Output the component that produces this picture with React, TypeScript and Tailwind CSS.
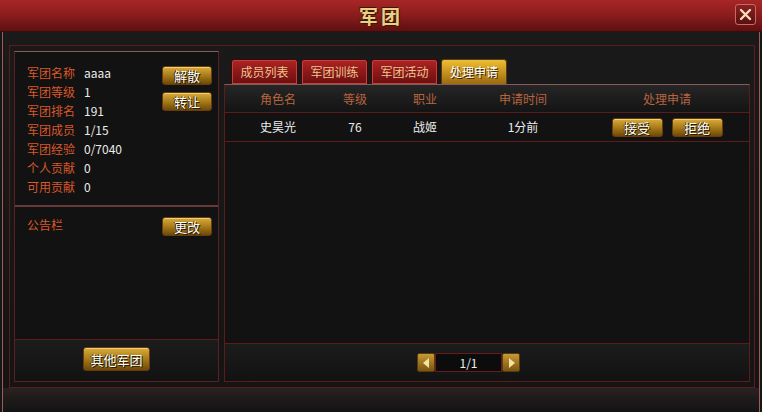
const cn = "font-['Noto_Sans_CJK_SC','Noto_Sans',sans-serif]"

const info = [
  ['军团名称', 'aaaa'],
  ['军团等级', '1'],
  ['军团排名', '191'],
  ['军团成员', '1/15'],
  ['军团经验', '0/7040'],
  ['个人贡献', '0'],
  ['可用贡献', '0'],
]

const tabs = ['成员列表', '军团训练', '军团活动', '处理申请']

function GoldButton({ label, className }: { label: string; className: string }) {
  return (
    <button
      className={`flex items-center justify-center rounded-[3px] border border-[#6a3a10] bg-gradient-to-b from-[#d8ac3c] via-[#a87c18] to-[#6e4a08] text-[13px] leading-none text-white shadow-[inset_0_1px_0_#f0d070] [text-shadow:1px_1px_0_#2a1800,-1px_0_0_#2a1800] ${className}`}
    >
      {label}
    </button>
  )
}

function Arrow({ dir }: { dir: 'left' | 'right' }) {
  return (
    <div className="flex h-[19px] w-[18px] items-center justify-center rounded-[2px] border border-[#5a3a10] bg-gradient-to-b from-[#c89a34] to-[#7a5410]">
      <svg width="7" height="10" viewBox="0 0 7 10">
        {dir === 'left' ? (
          <path d="M6 0 L0 5 L6 10 Z" fill="#f4e2a0" />
        ) : (
          <path d="M1 0 L7 5 L1 10 Z" fill="#f4e2a0" />
        )}
      </svg>
    </div>
  )
}

export default function App() {
  return (
    <div className={`flex h-[412px] w-[762px] flex-col overflow-hidden bg-[#161616] ${cn}`}>
      {/* title bar */}
      <div className="relative flex h-[32px] shrink-0 items-center justify-center border-b border-[#3a0c0c] bg-gradient-to-b from-[#a82626] via-[#8a1c1c] to-[#5c1010]">
        <span className="pt-[2px] text-[19px] font-bold tracking-[3px] text-[#ecce88] [text-shadow:1px_1px_0_#3a1a00,-1px_-1px_0_#3a1a00]">
          军团
        </span>
        <button className="absolute right-[6px] top-[4px] flex h-[21px] w-[21px] items-center justify-center rounded-[3px] border border-[#c86868] bg-gradient-to-b from-[#8a2020] to-[#5a1010]">
          <svg width="13" height="13" viewBox="0 0 13 13">
            <path d="M2 2 L11 11 M11 2 L2 11" stroke="#f6dcb8" strokeWidth="2.4" strokeLinecap="round" />
          </svg>
        </button>
      </div>

      {/* body */}
      <div className="mx-[2px] flex flex-1 flex-col border-x border-[#a05a5a] bg-gradient-to-b from-[#1a1a1a] to-[#141414]">
        <div className="ml-[6px] mr-[4px] mt-[13px] flex border border-[#5c1c1c] px-[4px] pb-[5px] pt-[5px]">
          {/* left panel */}
          <div className="flex h-[331px] w-[206px] flex-col border border-[#5c2020] border-t-[#8a5a5a] bg-[#121212]">
            <div className="flex h-[155px] border-b-2 border-[#6a3a3a] pl-[12px] pr-[6px] pt-[13px]">
              <div className="flex flex-1 flex-col gap-[3px]">
                {info.map(([k, v]) => (
                  <div key={k} className="flex h-[16px] items-center text-[12px] leading-none">
                    <span className="w-[57px] text-[#d9582a]">{k}</span>
                    <span className="text-[#ececec]">{v}</span>
                  </div>
                ))}
              </div>
              <div className="flex flex-col gap-[7px] pt-[1px]">
                <GoldButton label="解散" className="h-[19px] w-[50px]" />
                <GoldButton label="转让" className="h-[19px] w-[50px]" />
              </div>
            </div>
            <div className="flex flex-1 items-start justify-between border-b border-[#5c1c1c] pl-[12px] pr-[6px] pt-[10px]">
              <span className="pt-[2px] text-[12px] leading-none text-[#d9582a]">公告栏</span>
              <GoldButton label="更改" className="h-[19px] w-[50px]" />
            </div>
            <div className="flex h-[41px] items-start justify-center bg-gradient-to-b from-[#1c1c1c] to-[#121212] pt-[7px]">
              <GoldButton label="其他军团" className="h-[24px] w-[67px]" />
            </div>
          </div>

          {/* right column */}
          <div className="ml-[5px] mt-[8px] flex flex-1 flex-col">
            <div className="flex h-[25px] gap-[3px] pl-[7px]">
              {tabs.map((t, i) => (
                <div
                  key={t}
                  className={
                    i === 3
                      ? 'flex w-[66px] items-center justify-center rounded-t-[3px] border border-b-0 border-[#5a3a10] bg-gradient-to-b from-[#ecbe34] via-[#c89420] to-[#9a6a10] text-[12px] text-white [text-shadow:1px_1px_0_#3a2000]'
                      : 'flex w-[67px] items-center justify-center rounded-t-[3px] border border-b-0 border-[#3a0a0a] bg-gradient-to-b from-[#b02424] via-[#8c1818] to-[#6a1010] text-[12px] text-[#eac690] shadow-[inset_0_0_0_1px_#c04040]'
                  }
                >
                  {t}
                </div>
              ))}
            </div>
            <div className="flex h-[298px] w-[526px] flex-col border border-[#5c1c1c] border-t-[#8a5a5a] bg-[#121212]">
              <div className="flex h-[28px] items-center border-b border-[#5c1c1c] bg-gradient-to-b from-[#262626] to-[#141414] pt-[1px] text-[12px] text-[#b8643e]">
                <span className="w-[106px] text-center">角色名</span>
                <span className="w-[48px] text-center">等级</span>
                <span className="w-[92px] text-center">职业</span>
                <span className="w-[104px] text-center">申请时间</span>
                <span className="flex-1 pl-[10px] text-center">处理申请</span>
              </div>
              <div className="flex h-[29px] items-center border-b border-[#5c1c1c] text-[12px] text-[#ececec]">
                <span className="w-[106px] text-center">史昊光</span>
                <span className="w-[48px] text-center">76</span>
                <span className="w-[92px] text-center">战姬</span>
                <span className="w-[104px] text-center">1分前</span>
                <div className="flex flex-1 justify-center gap-[9px] pl-[10px]">
                  <GoldButton label="接受" className="h-[19px] w-[51px]" />
                  <GoldButton label="拒绝" className="h-[19px] w-[51px]" />
                </div>
              </div>
              <div className="flex-1 border-b border-[#5c1c1c]" />
              <div className="flex h-[37px] items-start bg-gradient-to-b from-[#1c1c1c] to-[#121212] pl-[192px] pt-[9px]">
                <Arrow dir="left" />
                <div className="flex h-[19px] w-[67px] items-center justify-center border border-[#6a1a1a] bg-[#0c0c0c] text-[12px] text-[#ececec]">
                  1/1
                </div>
                <Arrow dir="right" />
              </div>
            </div>
          </div>
        </div>
        <div className="flex-1 bg-gradient-to-b from-[#2a2222] via-[#1e1a1a] to-[#141414]" />
      </div>
    </div>
  )
}
